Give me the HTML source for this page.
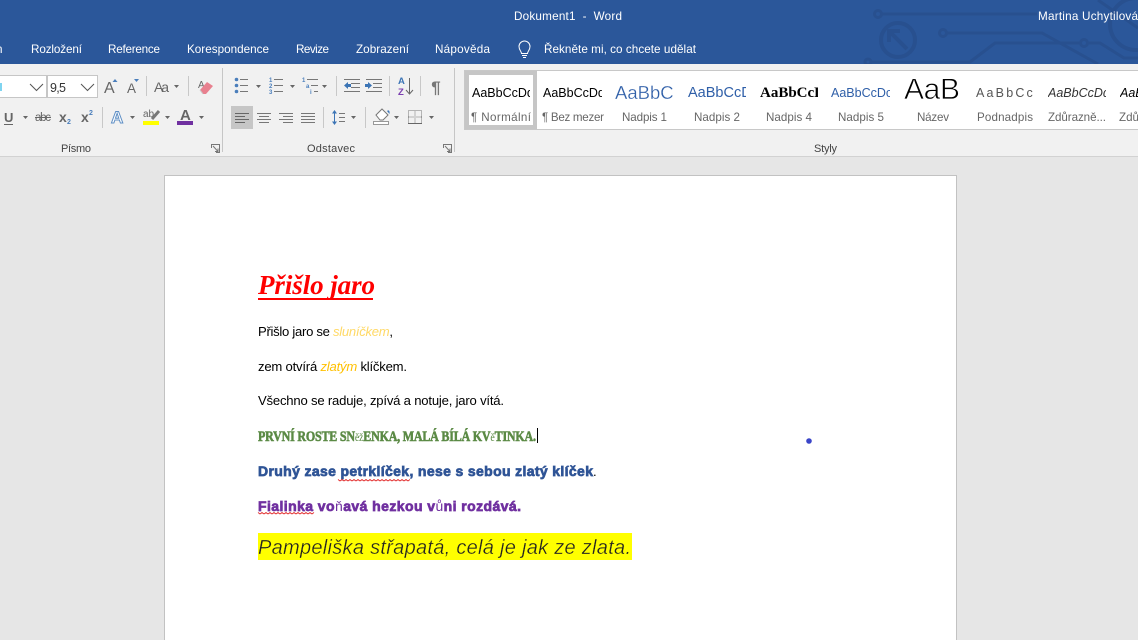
<!DOCTYPE html>
<html lang="cs"><head><meta charset="utf-8"><title>Dokument1 - Word</title>
<style>
html,body{margin:0;padding:0;width:1138px;height:640px;overflow:hidden;background:#e6e6e6}
svg{display:block}
text{font-family:"Liberation Sans",sans-serif;white-space:pre}
.tab{font-size:11.700px;fill:#fff}
.lab{font-size:11.600px;fill:#666}
.grp{font-size:11px;fill:#444}
.bar{stroke:#777;stroke-width:1;fill:none}
.blue{fill:#4a7ebb}
.chev{fill:#666}
.sep{stroke:#c8c8c8;stroke-width:1}
.doc{font-size:13.100px;fill:#000}
</style></head><body>
<svg xmlns="http://www.w3.org/2000/svg" width="1138" height="640" viewBox="0 0 1138 640">
<rect width="1138" height="640" fill="#e6e6e6"/>
<rect width="1138" height="64" fill="#2b579a"/>

<svg x="0" y="0" width="1138" height="64">
<g fill="none" stroke="#28508f" stroke-width="3">
<circle cx="878" cy="14" r="3.500"/><path d="M882 14H1037"/>
<circle cx="898" cy="40" r="17" stroke-width="4"/>
<path d="M890 32l17 17M889 42V31h11" stroke-width="4"/>
<circle cx="943" cy="33" r="3.500"/><path d="M947 33H1042L1098 64"/>
<circle cx="868" cy="62" r="3"/><path d="M872 62H970L995 43H1079"/><circle cx="1084" cy="43" r="3.500"/>
<path d="M1089 43H1100L1124 58H1138"/>
<circle cx="1136" cy="24" r="26" stroke-width="4"/>
<path d="M1098 0L1138 28"/>
</g>
</svg>

<rect y="64" width="1138" height="92" fill="#f1f1f1"/>
<rect y="156" width="1138" height="1" fill="#d2d2d2"/>
<rect x="164.500" y="175.500" width="792" height="470" fill="#fff" stroke="#c2c2c2"/>

<text x="514" y="20" class="tab" textLength="108" lengthAdjust="spacing">Dokument1  -  Word</text>
<text x="1038" y="20" class="tab" textLength="100" lengthAdjust="spacing">Martina Uchytilová</text>
<text x="-4" y="53" class="tab">n</text>
<text x="31" y="53" class="tab" textLength="51" lengthAdjust="spacing">Rozložení</text>
<text x="108" y="53" class="tab" textLength="52" lengthAdjust="spacing">Reference</text>
<text x="187" y="53" class="tab" textLength="82" lengthAdjust="spacing">Korespondence</text>
<text x="296" y="53" class="tab" textLength="33" lengthAdjust="spacing">Revize</text>
<text x="356" y="53" class="tab" textLength="53" lengthAdjust="spacing">Zobrazení</text>
<text x="435" y="53" class="tab" textLength="55" lengthAdjust="spacing">Nápověda</text>
<text x="544" y="53" class="tab" textLength="152" lengthAdjust="spacing">Řekněte mi, co chcete udělat</text>
<g fill="none" stroke="#fff" stroke-width="1">
<path d="M521.500 53.500c0-2-2.500-3.500-2.500-7a5.500 5.500 0 0 1 11 0c0 3.500-2.500 5-2.500 7z"/>
<path d="M522 55.500h5M523 57.500h3"/>
</g>

<!-- font boxes -->
<rect x="-5" y="75.500" width="51.500" height="22" fill="#fff" stroke="#c6c6c6"/>
<rect x="47.500" y="75.500" width="50" height="22" fill="#fff" stroke="#c6c6c6"/>
<rect x="0" y="83" width="2" height="8" fill="#7fd4f0"/>
<text x="50" y="92" font-size="12.500" fill="#333" textLength="16" lengthAdjust="spacing">9,5</text>
<path d="M30 84l6.500 6.500L43 84M81 84l6.500 6.500L94 84" fill="none" stroke="#555"/>

<!-- row 1 font -->
<text x="104" y="93" font-size="16" fill="#666">A</text>
<path d="M112.500 82l2.500-3 2.500 3z" class="blue"/>
<text x="127" y="93" font-size="13.500" fill="#666">A</text>
<path d="M134 79h5l-2.500 3z" class="blue"/>
<path class="sep" d="M146.500 76v20M188.500 76v20"/>
<text x="154" y="92" font-size="14" fill="#666" textLength="15" lengthAdjust="spacing">Aa</text>
<path class="chev" d="M174 85h5l-2.500 3z"/>
<text x="198" y="88" font-size="10" fill="#666">A</text>
<path d="M200 90l7-8 6 4-7 8h-3z" fill="#e8808f"/>
<path d="M200 90l3 4" stroke="#c9c9c9" fill="none"/>

<!-- row 2 font -->
<text x="4" y="122" font-size="13" font-weight="bold" fill="#666">U</text>
<rect x="4" y="124" width="9" height="1" fill="#666"/>
<path class="chev" d="M23 116h5l-2.500 3z"/>
<text x="35" y="121" font-size="11.500" fill="#666" textLength="16" lengthAdjust="spacing">abc</text>
<rect x="35" y="117" width="16" height="1" fill="#666"/>
<text x="59" y="122" font-size="14" font-weight="bold" fill="#666">x</text>
<text x="67" y="124" font-size="7" font-weight="bold" fill="#4a7ebb">2</text>
<text x="81" y="122" font-size="14" font-weight="bold" fill="#666">x</text>
<text x="89" y="115" font-size="7" font-weight="bold" fill="#4a7ebb">2</text>
<path class="sep" d="M102.500 107v21"/>
<text x="111" y="123" font-size="17" font-weight="bold" fill="#fff" stroke="#5f8fc5" stroke-width="1">A</text>
<path class="chev" d="M130 116h5l-2.500 3z"/>
<text x="143" y="117" font-size="10" fill="#666">ab</text>
<path d="M152 119l7-8" stroke="#777" stroke-width="3" fill="none"/>
<rect x="143" y="121" width="16" height="4" fill="#ffff00"/>
<path class="chev" d="M165 116h5l-2.500 3z"/>
<text x="180" y="120" font-size="15" font-weight="bold" fill="#666">A</text>
<rect x="177" y="121" width="16" height="4" fill="#7030a0"/>
<path class="chev" d="M199 116h5l-2.500 3z"/>

<path d="M222.500 68v84M454.500 68v84" stroke="#c6c6c6"/>

<!-- paragraph row 1 -->
<g class="blue"><circle cx="236.500" cy="79.500" r="1.800"/><circle cx="236.500" cy="85.500" r="1.800"/><circle cx="236.500" cy="91.500" r="1.800"/></g>
<path class="bar" d="M240 79.500h8M240 85.500h8M240 91.500h8"/>
<path class="chev" d="M256 85h5l-2.500 3z"/>
<g font-size="6" font-weight="bold" fill="#4a7ebb"><text x="269" y="82">1</text><text x="269" y="88">2</text><text x="269" y="94">3</text></g>
<path class="bar" d="M274 79.500h9M274 85.500h9M274 91.500h9"/>
<path class="chev" d="M290 85h5l-2.500 3z"/>
<g font-size="6" font-weight="bold" fill="#4a7ebb"><text x="302" y="82">1</text><text x="306" y="88">a</text><text x="310" y="94">i</text></g>
<path class="bar" d="M307 79.500h11M311 85.500h7M314 91.500h4"/>
<path class="chev" d="M322 85h5l-2.500 3z"/>
<path class="sep" d="M336.500 76v20M389.500 76v20M420.500 76v20"/>
<path class="bar" d="M344 79.500h16M351 83.500h9M351 87.500h9M344 91.500h16"/>
<path d="M344 85.500l4-3.500v2h3v3h-3v2z" fill="#3b74b5"/>
<path class="bar" d="M366 79.500h16M366 91.500h16M373 83.500h9M373 87.500h9"/>
<path d="M372 85.500l-4-3.500v2h-3v3h3v2z" fill="#3b74b5"/>
<text x="398" y="84" font-size="9.500" font-weight="bold" fill="#3b74b5">A</text>
<text x="398" y="95" font-size="9.500" font-weight="bold" fill="#7b3fb0">Z</text>
<path d="M409.500 78v16M406 90l3.500 4 3.500-4" fill="none" stroke="#666"/>
<text x="436" y="93" font-size="17" font-weight="bold" fill="#777" text-anchor="middle">¶</text>

<!-- paragraph row 2 -->
<rect x="231" y="106" width="22" height="23" fill="#c6c6c6"/>
<path d="M235 113.500h14M235 116.500h10M235 119.500h14M235 122.500h10" stroke="#666" fill="none"/>
<path class="bar" d="M257 113.500h14M259 116.500h10M257 119.500h14M259 122.500h10"/>
<path class="bar" d="M279 113.500h14M283 116.500h10M279 119.500h14M283 122.500h10"/>
<path class="bar" d="M301 113.500h14M301 116.500h14M301 119.500h14M301 122.500h14"/>
<path class="sep" d="M323.500 107v21M365.500 107v21"/>
<path d="M334.500 111v13" stroke="#3b74b5" fill="none"/>
<path d="M332 113.500l2.500-3.500 2.500 3.500zM332 121.500l2.500 3.500 2.500-3.500z" fill="#3b74b5"/>
<path class="bar" d="M339 113.500h6M339 117.500h6M339 121.500h6"/>
<path class="chev" d="M351 116h5l-2.500 3z"/>
<path d="M376 115l6-6 6 6-5 5h-3z" fill="#fff" stroke="#777"/>
<path d="M387 111q3-2 2.500 3z" fill="#3b74b5"/>
<rect x="373.500" y="121.500" width="15" height="3" fill="#fff" stroke="#999"/>
<path class="chev" d="M394 116h5l-2.500 3z"/>
<path d="M408.500 110.500h13v13h-13zM415 110.500v13M408.500 117h13" fill="none" stroke="#777" stroke-dasharray="1 1"/>
<path d="M408 123.500h14" stroke="#666" fill="none"/>
<path class="chev" d="M429 116h5l-2.500 3z"/>

<!-- launchers -->
<g fill="none" stroke="#777"><path d="M211.500 148v-3.500h8v8H216M213 146l5 5.500M218 148.500v3h-3"/><path d="M443.500 148v-3.500h8v8H448M445 146l5 5.500M450 148.500v3h-3"/></g>

<text x="61" y="152" class="grp" textLength="30" lengthAdjust="spacing">Písmo</text>
<text x="307" y="152" class="grp" textLength="48" lengthAdjust="spacing">Odstavec</text>
<text x="814" y="152" class="grp" textLength="23" lengthAdjust="spacing">Styly</text>

<!-- gallery -->
<rect x="464.500" y="70.500" width="680" height="59" fill="#fff" stroke="#c8c8c8"/>
<rect x="467" y="73" width="68" height="54" fill="#fff" stroke="#c6c6c6" stroke-width="4"/>

<svg x="472" y="80" width="58" height="26"><text x="0" y="17" font-size="12.500" fill="#000">AaBbCcDd</text></svg>
<svg x="543" y="80" width="59" height="26"><text x="0" y="17" font-size="12.500" fill="#000">AaBbCcDd</text></svg>
<svg x="615" y="78" width="59" height="28"><text x="0" y="21" font-size="18.500" fill="#2f5fa8" stroke="#fff" stroke-width=".25">AaBbCc</text></svg>
<svg x="688" y="78" width="58" height="28"><text x="0" y="19" font-size="14.500" fill="#2f5fa8">AaBbCcD</text></svg>
<svg x="760" y="80" width="58" height="26"><text x="0" y="17" font-size="15" font-weight="bold" fill="#000" style="font-family:'Liberation Serif',serif">AaBbCcD</text></svg>
<svg x="831" y="80" width="59" height="26"><text x="0" y="17" font-size="12.500" fill="#2f5fa8">AaBbCcDc</text></svg>
<svg x="904" y="79" width="56" height="26"><text x="0" y="20" font-size="30" fill="#000" stroke="#fff" stroke-width=".7" textLength="56" lengthAdjust="spacing">AaB</text></svg>
<svg x="976" y="80" width="58" height="26"><text x="0" y="17" font-size="12.500" fill="#555" textLength="68" lengthAdjust="spacing">AaBbCcD</text></svg>
<svg x="1048" y="80" width="58" height="26"><text x="0" y="17" font-size="12.500" font-style="italic" fill="#333">AaBbCcDd</text></svg>
<svg x="1120" y="80" width="18" height="26"><text x="0" y="17" font-size="12.500" font-style="italic" fill="#000">AaB</text></svg>

<text x="471" y="121" class="lab" textLength="60" lengthAdjust="spacing">¶ Normální</text>
<text x="542" y="121" class="lab" textLength="62" lengthAdjust="spacing">¶ Bez mezer</text>
<text x="622" y="121" class="lab" textLength="45" lengthAdjust="spacing">Nadpis 1</text>
<text x="694" y="121" class="lab" textLength="46" lengthAdjust="spacing">Nadpis 2</text>
<text x="766" y="121" class="lab" textLength="46" lengthAdjust="spacing">Nadpis 4</text>
<text x="838" y="121" class="lab" textLength="46" lengthAdjust="spacing">Nadpis 5</text>
<text x="917" y="121" class="lab" textLength="32" lengthAdjust="spacing">Název</text>
<text x="977" y="121" class="lab" textLength="56" lengthAdjust="spacing">Podnadpis</text>
<text x="1048" y="121" class="lab" textLength="58" lengthAdjust="spacing">Zdůrazně...</text>
<text x="1119" y="121" class="lab">Zdů</text>

<!-- document -->
<text x="258" y="294" font-size="27" font-weight="bold" font-style="italic" fill="#ff0000" style="font-family:'Liberation Serif',serif" textLength="117" lengthAdjust="spacing">Přišlo jaro</text>
<rect x="258" y="298" width="115" height="2" fill="#ff0000"/>

<text x="258" y="336" class="doc" textLength="135" lengthAdjust="spacing">Přišlo jaro se <tspan font-style="italic" fill="#ffd966">sluníčkem</tspan>,</text>
<text x="258" y="371" class="doc" textLength="149" lengthAdjust="spacing">zem otvírá <tspan font-style="italic" fill="#ffc000">zlatým</tspan> klíčkem.</text>
<text x="258" y="405" class="doc" textLength="246" lengthAdjust="spacing">Všechno se raduje, zpívá a notuje, jaro vítá.</text>

<text transform="translate(258 441) scale(1 1.2)" x="0" y="0" font-size="12" font-weight="bold" fill="#5b8a45" stroke="#5b8a45" stroke-width=".5" style="font-family:'Liberation Serif',serif" textLength="278" lengthAdjust="spacing">PRVNÍ ROSTE SN<tspan font-weight="normal" font-size="10" stroke-width="0">ěž</tspan>ENKA, MALÁ BÍLÁ KV<tspan font-weight="normal" font-size="10" stroke-width="0">ě</tspan>TINKA.</text>
<rect x="537" y="428" width="1" height="15" fill="#000"/>
<circle cx="809" cy="441" r="2.800" fill="#3a45c8"/>

<text x="258" y="476" font-size="14" font-weight="bold" fill="#2f5496" stroke="#2f5496" stroke-width=".7" textLength="335" lengthAdjust="spacing">Druhý zase petrklíček, nese s sebou zlatý klíček</text>
<text x="593" y="476" font-size="13" fill="#000">.</text>
<path d="M338 479.500l2 1.500 2-1.500 2 1.500 2-1.500 2 1.500 2-1.500 2 1.500 2-1.500 2 1.500 2-1.500 2 1.500 2-1.500 2 1.500 2-1.500 2 1.500 2-1.500 2 1.500 2-1.500 2 1.500 2-1.500 2 1.500 2-1.500 2 1.500 2-1.500 2 1.500 2-1.500 2 1.500 2-1.500 2 1.500 2-1.500 2 1.500 2-1.500 2 1.500 2-1.500 2 1.500 2-1.500" fill="none" stroke="#e02020" stroke-width=".8"/>

<text x="258" y="511" font-size="14" font-weight="bold" fill="#7030a0" stroke="#7030a0" stroke-width=".7" textLength="263" lengthAdjust="spacing">Fialinka vo<tspan font-weight="normal" stroke-width="0">ň</tspan>avá hezkou v<tspan font-weight="normal" stroke-width="0">ů</tspan>ni rozdává.</text>
<path d="M258 512.500l2 1.500 2-1.500 2 1.500 2-1.500 2 1.500 2-1.500 2 1.500 2-1.500 2 1.500 2-1.500 2 1.500 2-1.500 2 1.500 2-1.500 2 1.500 2-1.500 2 1.500 2-1.500 2 1.500 2-1.500 2 1.500 2-1.500 2 1.500 2-1.500 2 1.500 2-1.500 2 1.500 2-1.500" fill="none" stroke="#e02020" stroke-width=".8"/>

<rect x="258" y="533" width="374" height="27" fill="#ffff00"/>
<text x="258" y="554" font-size="20" font-style="italic" fill="#222" stroke="#ffff00" stroke-width=".3" textLength="373" lengthAdjust="spacing">Pampeliška střapatá, celá je jak ze zlata.</text>
</svg>
</body></html>
